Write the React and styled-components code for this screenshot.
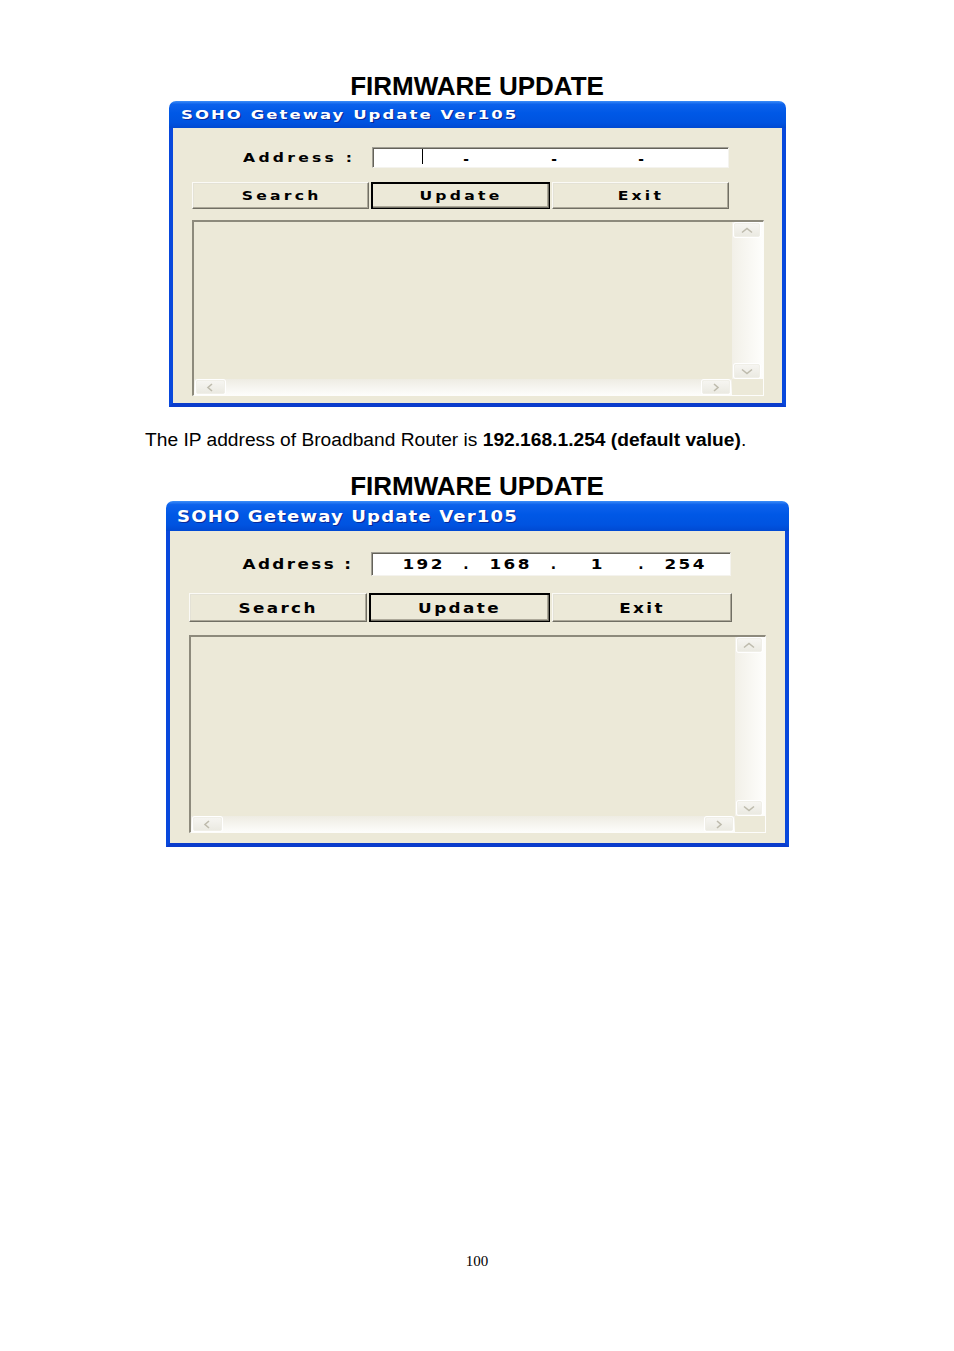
import React from 'react';
import styled, {createGlobalStyle, css} from 'styled-components';

const GlobalStyle = createGlobalStyle`
    body {
        margin: 0;
        background: #fff;
    }
`

// the first shot is stretched sideways, so its text gets a wider scale
const small = {
    width: 617, titleH: 27, titleFont: 13, titleLs: 1.6, titleSx: 1.27, titlePad: 12,
    padTop: 19, padLeft: 19, labelW: 180, inputW: 357, rowH: 21, font: 12, ls: 2.5, sx: 1.3,
    gap1: 14, btnH: 27, btnCols: '177px 179px 177px', gap2: 11,
    areaW: 572, areaH: 176, vsW: 31, padBottom: 7, segPad: 10, stretchDot: true,
}

const large = {
    width: 623, titleH: 30, titleFont: 16, titleLs: 1, titleSx: 1.13, titlePad: 11,
    padTop: 21, padLeft: 19, labelW: 182, inputW: 360, rowH: 24, font: 14, ls: 2, sx: 1.2,
    gap1: 17, btnH: 29, btnCols: '178px 181px 180px', gap2: 13,
    areaW: 577, areaH: 198, vsW: 30, padBottom: 10, segPad: 11, stretchDot: false,
}

const Page = styled.div`
    width: 954px;
    min-height: 1351px;
    box-sizing: border-box;
    padding: 72px 145px 0;
    display: flex;
    flex-direction: column;
    font-family: "Liberation Sans", Arial, sans-serif;
    color: #000;
`

const Heading = styled.h2`
    margin: ${({$top}) => $top}px 0 0;
    font-size: 26px;
    line-height: 28px;
    font-weight: bold;
    text-align: center;
`

const Paragraph = styled.p`
    margin: 22px 0 0;
    font-size: 19.2px;
    line-height: 22px;
    b { font-weight: bold; }
`

const PageNumber = styled.div`
    margin-top: 406px;
    text-align: center;
    font-family: "Liberation Serif", "Times New Roman", serif;
    font-size: 15px;
    line-height: 17px;
`

const Window = styled.div`
    width: ${({$c}) => $c.width}px;
    margin: 1px auto 0;
    display: flex;
    flex-direction: column;
    font-family: "DejaVu Sans", Verdana, sans-serif;
    font-weight: bold;
`

const TitleBar = styled.div`
    height: ${({$c}) => $c.titleH}px;
    padding-left: ${({$c}) => $c.titlePad}px;
    display: flex;
    align-items: center;
    border-radius: 7px 7px 0 0;
    background: linear-gradient(to bottom, #3d8ef8 0%, #0d62ec 12%, #0058e6 45%, #0053e0 80%, #0049d2 100%);
    color: #fff;
    font-size: ${({$c}) => $c.titleFont}px;
    text-shadow: 1px 1px 0 #0a2a9a;
    white-space: nowrap;
`

const Wide = styled.span`
    display: inline-block;
    letter-spacing: ${({$ls}) => $ls}px;
    margin-right: -${({$ls}) => $ls}px;
    transform: scaleX(${({$sx}) => $sx});
    transform-origin: ${({$origin}) => $origin || 'center'};
    white-space: nowrap;
`

const Body = styled.div`
    background: #ece9d8;
    border-style: solid;
    border-width: 0 4px 4px;
    border-color: #0a56ea #0848dc #0a3ccc;
    padding: ${({$c}) => `${$c.padTop}px 0 ${$c.padBottom}px ${$c.padLeft}px`};
    display: flex;
    flex-direction: column;
    align-items: flex-start;
`

const AddressRow = styled.div`
    display: flex;
    height: ${({$c}) => $c.rowH}px;
`

const Label = styled.div`
    width: ${({$c}) => $c.labelW}px;
    box-sizing: border-box;
    padding-right: 19px;
    display: flex;
    align-items: center;
    justify-content: flex-end;
    font-size: ${({$c}) => $c.font}px;
`

const IpField = styled.div`
    width: ${({$c}) => $c.inputW}px;
    box-sizing: border-box;
    background: #fff;
    border: 1px solid;
    border-color: #a09e94 #f4f3ee #f4f3ee #a09e94;
    box-shadow: inset 1px 1px 0 #646259;
    padding-left: ${({$c}) => $c.segPad}px;
    display: grid;
    grid-template-columns: 79.5px 8px 79.5px 8px 79.5px 8px 79.5px;
    align-items: center;
    font-size: ${({$c}) => $c.font}px;
`

const Segment = styled.span`
    text-align: center;
`

const Dot = styled.span`
    text-align: center;
    ${({$stretch}) => $stretch && css`
        transform: scale(2, 0.8);
    `}
`

const Caret = styled.span`
    justify-self: center;
    align-self: start;
    margin-top: 1px;
    width: 1px;
    height: 15px;
    background: #000;
`

const ButtonRow = styled.div`
    margin-top: ${({$c}) => $c.gap1}px;
    display: grid;
    grid-template-columns: ${({$c}) => $c.btnCols};
    column-gap: 2px;
    height: ${({$c}) => $c.btnH}px;
`

const Button = styled.div`
    box-sizing: border-box;
    display: flex;
    align-items: center;
    justify-content: center;
    background: #ece9d8;
    border: 1px solid;
    border-color: #fbfaf6 #716f64 #716f64 #fbfaf6;
    box-shadow: inset -1px -1px 0 #aca899, inset 1px 1px 0 #e4e2d6;
    font-size: ${({$c}) => $c.font}px;
    ${({$default}) => $default && css`
        border-color: #000;
        box-shadow: inset 1px 1px 0 #000, inset -1px -1px 0 #716f64, inset -2px -2px 0 #aca899;
    `}
`

const LogArea = styled.div`
    margin-top: ${({$c}) => $c.gap2}px;
    width: ${({$c}) => $c.areaW}px;
    height: ${({$c}) => $c.areaH}px;
    box-sizing: border-box;
    border-style: solid;
    border-width: 2px 1px 1px 2px;
    border-color: #8d8a7c #fdfdfb #fdfdfb #8d8a7c;
    display: grid;
    grid-template-columns: 1fr ${({$c}) => $c.vsW}px;
    grid-template-rows: 1fr 16px;
    background: #ece9d8;
`

const VScroll = styled.div`
    grid-column: 2;
    grid-row: 1;
    padding: 1px 3px 1px 2px;
    display: flex;
    flex-direction: column;
    justify-content: space-between;
    background: linear-gradient(to right, #f2f0e8, #fefefc);
`

const HScroll = styled.div`
    grid-column: 1;
    grid-row: 2;
    padding: 1px 2px 1px 2px;
    display: flex;
    justify-content: space-between;
    background: linear-gradient(to bottom, #eeece3, #fdfdfb);
`

const ScrollButton = styled.div`
    box-sizing: border-box;
    width: ${({$w}) => $w};
    height: 14px;
    display: flex;
    align-items: center;
    justify-content: center;
    border: 1px solid #f0efe8;
    border-radius: 2px;
    background: linear-gradient(to bottom, #f6f5f1, #ebeae2);
    box-shadow: 0 0 0 1px #fff;
`

const Chevron = ({dir}) => {
    const pts = {
        up: '1,5.5 6,1.5 11,5.5',
        down: '1,1.5 6,5.5 11,1.5',
        left: '6,1 2,4.5 6,8',
        right: '2,1 6,4.5 2,8',
    }[dir]
    const vertical = dir === 'up' || dir === 'down'
    return (
        <svg width={vertical ? 12 : 8} height={vertical ? 7 : 9} viewBox={vertical ? '0 0 12 7' : '0 0 8 9'}>
            <polyline points={pts} fill="none" stroke="#bebbad" strokeWidth="1.6" />
        </svg>
    )
}

const UpdateWindow = ({c, ip}) => (
    <Window $c={c}>
        <TitleBar $c={c}>
            <Wide $ls={c.titleLs} $sx={c.titleSx} $origin="left">SOHO Geteway Update Ver105</Wide>
        </TitleBar>
        <Body $c={c}>
            <AddressRow $c={c}>
                <Label $c={c}>
                    <Wide $ls={c.ls} $sx={c.sx} $origin="right">Address :</Wide>
                </Label>
                <IpField $c={c}>
                    {ip
                        ? <Segment><Wide $ls={c.ls} $sx={c.sx}>{ip[0]}</Wide></Segment>
                        : <Caret />}
                    <Dot $stretch={c.stretchDot}>.</Dot>
                    <Segment><Wide $ls={c.ls} $sx={c.sx}>{ip ? ip[1] : ''}</Wide></Segment>
                    <Dot $stretch={c.stretchDot}>.</Dot>
                    <Segment><Wide $ls={c.ls} $sx={c.sx}>{ip ? ip[2] : ''}</Wide></Segment>
                    <Dot $stretch={c.stretchDot}>.</Dot>
                    <Segment><Wide $ls={c.ls} $sx={c.sx}>{ip ? ip[3] : ''}</Wide></Segment>
                </IpField>
            </AddressRow>
            <ButtonRow $c={c}>
                <Button $c={c}><Wide $ls={c.ls} $sx={c.sx}>Search</Wide></Button>
                <Button $c={c} $default><Wide $ls={c.ls} $sx={c.sx}>Update</Wide></Button>
                <Button $c={c}><Wide $ls={c.ls} $sx={c.sx}>Exit</Wide></Button>
            </ButtonRow>
            <LogArea $c={c}>
                <VScroll>
                    <ScrollButton $w="100%"><Chevron dir="up" /></ScrollButton>
                    <ScrollButton $w="100%"><Chevron dir="down" /></ScrollButton>
                </VScroll>
                <HScroll>
                    <ScrollButton $w="29px"><Chevron dir="left" /></ScrollButton>
                    <ScrollButton $w="28px"><Chevron dir="right" /></ScrollButton>
                </HScroll>
            </LogArea>
        </Body>
    </Window>
)

const App = () => (
    <>
        <GlobalStyle />
        <Page>
            <Heading $top={0}>FIRMWARE UPDATE</Heading>
            <UpdateWindow c={small} />
            <Paragraph>
                The IP address of Broadband Router is <b>192.168.1.254 (default value)</b>.
            </Paragraph>
            <Heading $top={21}>FIRMWARE UPDATE</Heading>
            <UpdateWindow c={large} ip={['192', '168', '1', '254']} />
            <PageNumber>100</PageNumber>
        </Page>
    </>
)

export default App
